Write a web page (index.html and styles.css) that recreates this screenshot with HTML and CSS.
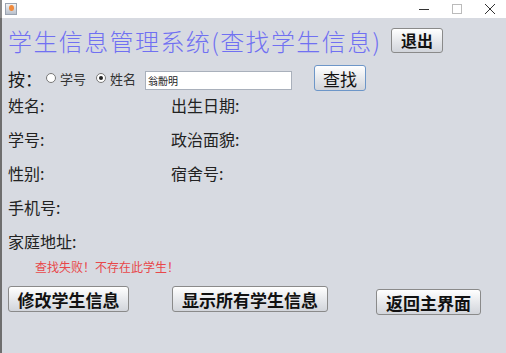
FILE: index.html
```html
<!DOCTYPE html>
<html lang="zh">
<head>
    <meta charset="UTF-8">
    <title>学生信息管理系统</title>
    <link rel="stylesheet" href="styles.css">
</head>
<body>
    <div class="window">
        <div class="titlebar">
            <div class="app-icon"><span class="flame"></span></div>
            <div class="win-controls">
                <span class="win-btn">
                    <svg width="12" height="12" viewBox="0 0 12 12"><path d="M1 6.5h10" stroke="#333" stroke-width="1"/></svg>
                </span>
                <span class="win-btn">
                    <svg width="12" height="12" viewBox="0 0 12 12"><rect x="1.5" y="1.5" width="9" height="9" fill="none" stroke="#bbb" stroke-width="1"/></svg>
                </span>
                <span class="win-btn">
                    <svg width="12" height="12" viewBox="0 0 12 12"><path d="M1 1l10 10M11 1L1 11" stroke="#333" stroke-width="1"/></svg>
                </span>
            </div>
        </div>

        <div class="content">
            <div class="title-row">
                <h1 class="title">学生信息管理系统(查找学生信息)</h1>
                <button class="btn btn-exit">退出</button>
            </div>

            <div class="search-row">
                <span class="by-label">按：</span>
                <label class="radio"><span class="radio-dot"></span>学号</label>
                <label class="radio"><span class="radio-dot checked"></span>姓名</label>
                <div class="text-input">翁黺明</div>
                <button class="btn btn-find">查找</button>
            </div>

            <div class="fields">
                <div class="field">姓名:</div>
                <div class="field">出生日期:</div>
                <div class="field">学号:</div>
                <div class="field">政治面貌:</div>
                <div class="field">性别:</div>
                <div class="field">宿舍号:</div>
                <div class="field">手机号:</div>
                <div class="field"></div>
                <div class="field">家庭地址:</div>
                <div class="field"></div>
            </div>

            <div class="message">查找失败！不存在此学生！</div>

            <div class="actions">
                <button class="btn btn-big btn-modify">修改学生信息</button>
                <button class="btn btn-big btn-showall">显示所有学生信息</button>
                <button class="btn btn-big btn-back">返回主界面</button>
            </div>
        </div>
    </div>
</body>
</html>
```

FILE: styles.css
```css
:root {
    --bg-color: #d7dae1;
    --title-color: #7070f2;
    --text-color: #1a1a1a;
    --error-color: #e8474a;
    --btn-border: #8a8a8a;
}

* {
    margin: 0;
    padding: 0;
    box-sizing: border-box;
}

body {
    width: 506px;
    height: 353px;
    overflow: hidden;
    background-color: var(--bg-color);
    font-family: "Noto Sans CJK SC", "DejaVu Sans", sans-serif;
    color: var(--text-color);
}

.window {
    height: 353px;
    display: flex;
    flex-direction: column;
}

/* title bar */
.titlebar {
    height: 18px;
    background-color: #ffffff;
    display: flex;
    align-items: center;
    justify-content: space-between;
    border-left: 2px solid #8a8a8a;
}

.app-icon {
    width: 12px;
    height: 12px;
    margin-left: 3px;
    background: linear-gradient(#f4f4f4, #b8c0cc);
    border: 1px solid #9aa3b0;
    display: flex;
    justify-content: center;
}

.flame {
    width: 5px;
    height: 6px;
    margin-top: 1px;
    border-radius: 50% 50% 40% 40%;
    background-color: #f08a3c;
}

.win-controls {
    display: flex;
}

.win-btn {
    width: 33px;
    height: 18px;
    display: flex;
    align-items: center;
    justify-content: center;
}

/* content */
.content {
    flex: 1;
    border-left: 2px solid #6e6e6e;
    padding-left: 6px;
}

.title-row {
    display: flex;
    align-items: center;
    height: 32px;
    margin-top: 6px;
}

.title {
    width: 383px;
    font-size: 24px;
    font-weight: 300;
    color: var(--title-color);
    letter-spacing: 1.4px;
    white-space: nowrap;
}

.btn {
    font-family: "Noto Sans CJK SC", sans-serif;
    font-weight: bold;
    color: #111;
    background: linear-gradient(#ffffff, #e3e5e9 60%, #d2d5db);
    border: 1px solid var(--btn-border);
    border-radius: 3px;
    cursor: pointer;
}

.btn-exit {
    width: 52px;
    height: 25px;
    font-size: 16px;
    line-height: 1;
}

.search-row {
    display: flex;
    align-items: center;
    height: 26px;
    margin-top: 9px;
}

.by-label {
    font-size: 17px;
    width: 38px;
}

.radio {
    display: flex;
    align-items: center;
    font-size: 13px;
    color: #333;
    margin-right: 10px;
}

.radio-dot {
    width: 10px;
    height: 10px;
    border-radius: 50%;
    border: 1px solid #777;
    background-color: #fff;
    margin-right: 4px;
    display: flex;
    align-items: center;
    justify-content: center;
}

.radio-dot.checked::after {
    content: "";
    width: 4px;
    height: 4px;
    border-radius: 50%;
    background-color: #222;
}

.text-input {
    width: 147px;
    height: 19px;
    margin-left: -1px;
    margin-top: 4px;
    background-color: #ffffff;
    border: 1px solid #a9b0bb;
    font-size: 10px;
    line-height: 17px;
    padding-left: 2px;
    color: #222;
}

.btn-find {
    width: 52px;
    height: 26px;
    margin-left: 22px;
    font-size: 17px;
    font-weight: normal;
    border-color: #6d96c8;
    line-height: 1;
}

.fields {
    display: grid;
    grid-template-columns: 163px 1fr;
    grid-auto-rows: 34px;
    align-items: center;
    margin-top: -3px;
}

.field {
    font-size: 16px;
    color: #222;
}

.message {
    height: 18px;
    margin-top: 0;
    padding-left: 27px;
    font-size: 12px;
    line-height: 18px;
    color: var(--error-color);
}

.actions {
    display: flex;
    align-items: flex-start;
    margin-top: 10px;
}

.btn-big {
    height: 26px;
    font-size: 17px;
    line-height: 1;
}

.btn-modify {
    width: 121px;
}

.btn-showall {
    width: 156px;
    margin-left: 43px;
}

.btn-back {
    width: 105px;
    margin-left: 48px;
    margin-top: 3px;
}
```
